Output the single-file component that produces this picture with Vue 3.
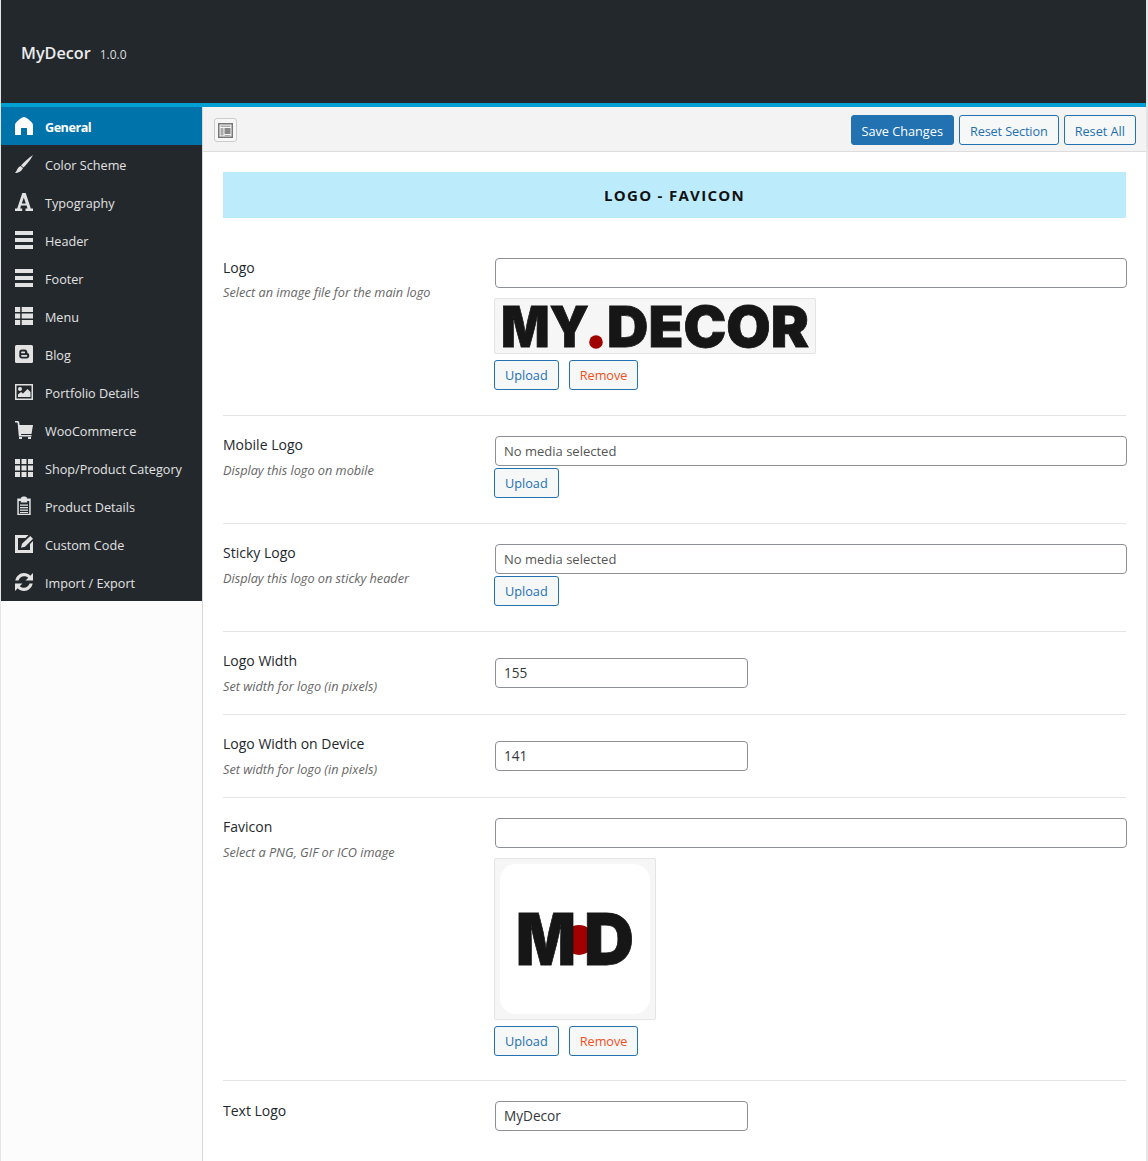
<template>
  <div class="wrap">
    <header class="topbar">
      <span class="brand">MyDecor</span>
      <span class="version">1.0.0</span>
    </header>
    <div class="panel">
      <aside class="side">
        <ul class="menu">
          <li v-for="item in menu" :key="item.label" class="menu-item" :class="{ active: item.active }">
            <svg class="menu-icon" viewBox="0 0 18 18" v-html="item.icon"></svg>
            <span class="menu-label">{{ item.label }}</span>
          </li>
        </ul>
      </aside>
      <main class="main">
        <div class="toolbar">
          <button class="expand">
            <svg width="15" height="15" viewBox="0 0 15 15">
              <rect x="0.75" y="0.75" width="13.5" height="13.5" fill="none" stroke="#777" stroke-width="1.5" />
              <rect x="2.5" y="2.5" width="10" height="1.5" fill="#aaa" />
              <rect x="2.5" y="5" width="3" height="7.5" fill="#aaa" />
              <rect x="6.5" y="5" width="6" height="6" fill="#888" />
              <rect x="6.5" y="12" width="6" height="1" fill="#aaa" />
            </svg>
          </button>
          <div class="actions">
            <button class="btn primary">Save Changes</button>
            <button class="btn tight">Reset Section</button>
            <button class="btn">Reset All</button>
          </div>
        </div>
        <div class="content">
          <h2 class="section-title">LOGO - FAVICON</h2>

          <section class="row first">
            <div class="label">
              <h4>Logo</h4>
              <p>Select an image file for the main logo</p>
            </div>
            <div class="field">
              <input class="text" type="text" />
              <div class="thumb logo-thumb">
                <svg width="320" height="54" viewBox="0 0 320 54">
                  <text x="6" y="47.5" class="logo-text" font-size="57" textLength="88" lengthAdjust="spacingAndGlyphs">MY</text>
                  <circle cx="101" cy="43" r="6.8" fill="#a00000" />
                  <text x="112" y="47.5" class="logo-text" font-size="57" textLength="202" lengthAdjust="spacingAndGlyphs">DECOR</text>
                </svg>
              </div>
              <div class="btns">
                <button class="btn up">Upload</button>
                <button class="btn up remove">Remove</button>
              </div>
            </div>
          </section>

          <section class="row">
            <div class="label">
              <h4>Mobile Logo</h4>
              <p>Display this logo on mobile</p>
            </div>
            <div class="field">
              <input class="text" type="text" placeholder="No media selected" />
              <div class="btns near">
                <button class="btn up">Upload</button>
              </div>
            </div>
          </section>

          <section class="row">
            <div class="label">
              <h4>Sticky Logo</h4>
              <p>Display this logo on sticky header</p>
            </div>
            <div class="field">
              <input class="text" type="text" placeholder="No media selected" />
              <div class="btns near">
                <button class="btn up">Upload</button>
              </div>
            </div>
          </section>

          <section class="row number">
            <div class="label">
              <h4>Logo Width</h4>
              <p>Set width for logo (in pixels)</p>
            </div>
            <div class="field">
              <input class="text short" type="text" value="155" />
            </div>
          </section>

          <section class="row number">
            <div class="label">
              <h4>Logo Width on Device</h4>
              <p>Set width for logo (in pixels)</p>
            </div>
            <div class="field">
              <input class="text short" type="text" value="141" />
            </div>
          </section>

          <section class="row favicon">
            <div class="label">
              <h4>Favicon</h4>
              <p>Select a PNG, GIF or ICO image</p>
            </div>
            <div class="field">
              <input class="text" type="text" />
              <div class="thumb fav-thumb">
                <div class="fav-inner">
                  <svg width="150" height="150" viewBox="0 0 150 150">
                    <circle cx="79" cy="76" r="15" fill="#a00000" />
                    <text x="16" y="101" class="logo-text" font-size="72" textLength="60" lengthAdjust="spacingAndGlyphs">M</text>
                    <text x="84" y="101" class="logo-text" font-size="72" textLength="50" lengthAdjust="spacingAndGlyphs">D</text>
                  </svg>
                </div>
              </div>
              <div class="btns">
                <button class="btn up">Upload</button>
                <button class="btn up remove">Remove</button>
              </div>
            </div>
          </section>

          <section class="row last">
            <div class="label">
              <h4>Text Logo</h4>
            </div>
            <div class="field">
              <input class="text short" type="text" value="MyDecor" />
            </div>
          </section>
        </div>
      </main>
    </div>
  </div>
</template>

<script setup>
const bars = '<path d="M0 0h18v4H0zM0 7h18v4H0zM0 14h18v4H0z"/>'

const menu = [
  { label: 'General', active: true, icon: '<path d="M9 0C11 0 18 5 18 8V18H12V11H6V18H0V8C0 5 7 0 9 0z"/>' },
  { label: 'Color Scheme', icon: '<path d="M18 0C15.500 5 11.500 9.500 8.500 12.500L6 10.500C9 7 14 2.500 18 0z"/><path d="M5.500 11L8 13C7 16 3 18 0 18C2 16.500 2 12.500 5.500 11z"/>' },
  { label: 'Typography', icon: '<path fill-rule="evenodd" d="M7.300 0h3.400L15.800 15.500H18V18h-7.500v-2.500h2L11.600 12.500H6L5.200 15.500h2V18H0v-2.500h2.200zM8.800 4.500L6.800 10.500h4z"/>' },
  { label: 'Header', icon: bars },
  { label: 'Footer', icon: bars },
  { label: 'Menu', icon: '<path d="M0 0h5.200v5H0zM6.700 0H18v5H6.700zM0 6.500h5.200v5H0zM6.700 6.500H18v5H6.700zM0 13h5.200v5H0zM6.700 13H18v5H6.700z"/>' },
  { label: 'Blog', icon: '<path fill-rule="evenodd" d="M1.500 0h15A1.500 1.500 0 0 1 18 1.500v15a1.500 1.500 0 0 1-1.500 1.500h-15A1.500 1.500 0 0 1 0 16.500v-15A1.500 1.500 0 0 1 1.500 0zM7 4.500A2.700 2.700 0 0 0 4.300 7.200v3.600A2.700 2.700 0 0 0 7 13.500h4.500a2.700 2.700 0 0 0 2.700-2.700V9.700c0-.9-.8-1.500-1.700-1.500 0-2-1-3.700-3-3.700zM7 6.500h2.200a.9.900 0 0 1 0 1.800H7a.9.900 0 0 1 0-1.800zM7 9.900h4.400a.9.900 0 0 1 0 1.800H7a.9.900 0 0 1 0-1.800z"/>' },
  { label: 'Portfolio Details', icon: '<path fill-rule="evenodd" d="M0 1h18v16H0zM1.500 2.500v13h15v-13z"/><circle cx="5" cy="6" r="2"/><path d="M3 14v-2.500l3-2.500 2 1.500 4.500-4.500 3 3V14z"/>' },
  { label: 'WooCommerce', icon: '<path d="M0 0h2.500c1 0 1.500.5 1.800 1.500L4.500 4H18l-1.500 9-10.500 0 .2 1H16.500v1.500H3.800L2.700 2.500C2.500 1.800 2.200 1.500 1.500 1.500H0z"/><rect x="4" y="16" width="3" height="2"/><rect x="13" y="16" width="3" height="2"/>' },
  { label: 'Shop/Product Category', icon: '<path d="M0 0h5v5H0zM6.500 0h5v5h-5zM13 0h5v5h-5zM0 6.500h5v5H0zM6.500 6.500h5v5h-5zM13 6.500h5v5h-5zM0 13h5v5H0zM6.500 13h5v5h-5zM13 13h5v5h-5z"/>' },
  { label: 'Product Details', icon: '<path fill-rule="evenodd" d="M2.300 1.500h3.700V1C6 .2 7.500-.5 9-.5s3 .7 3 1.500v.5h3.700V18H2.300zM3.800 4v12.700h10.400V4h-2v1.500h-6.400V4z"/><path d="M5 7.500h8v1.200H5zM5 10h8v1.200H5zM5 12.500h8v1.200H5zM5 15h8v1H5z"/>' },
  { label: 'Custom Code', icon: '<path d="M0 0h13.500L10.500 3H3v12h12V9l3-3V18H0z"/><path d="M15.300 1L18 3.700 10 11.800l-4 1 1-4z"/>' },
  { label: 'Import / Export', icon: '<path d="M9 0c2.500 0 4.700 1 6.300 2.700L18 0v7.500h-7.500l2.800-2.800C11.800 3.600 10.500 3.200 9 3.200c-2.600 0-4.800 1.800-5.500 4.300H.3C1.100 3.200 4.700 0 9 0z"/><path d="M9 18c-2.500 0-4.700-1-6.300-2.700L0 18v-7.500h7.500l-2.800 2.800c1.500 1.100 2.800 1.500 4.300 1.500 2.600 0 4.800-1.800 5.500-4.300h3.200C16.900 14.800 13.300 18 9 18z"/>' },
]
</script>

<style scoped>
* {
  box-sizing: border-box;
}

.wrap {
  height: 1161px;
  overflow: hidden;
  padding: 0 2px 0 1px;
  background: #e5e5e5;
  font-family: "Open Sans", sans-serif;
  font-size: 12.7px;
  color: #444;
}

.topbar {
  height: 107px;
  background: #23282d;
  border-bottom: 4px solid #00a0d2;
  padding-left: 20px;
  padding-top: 42px;
  display: flex;
  align-items: baseline;
  gap: 9px;
  color: #ececec;
}

.brand {
  font-size: 16.2px;
  font-weight: 600;
  line-height: 22px;
}

.version {
  font-size: 12px;
  color: #ddd;
}

.panel {
  display: flex;
  height: 1054px;
  background: #fff;
}

.side {
  width: 202px;
  flex: none;
  background: #fcfcfc;
  border-right: 1px solid #d8d8d8;
}

.menu {
  list-style: none;
  margin: 0;
  padding: 0;
  width: 201px;
  background: #23282d;
}

.menu-item {
  height: 38px;
  display: flex;
  align-items: center;
  padding-left: 14px;
  gap: 12px;
  color: #e2e2e2;
  font-size: 12.65px;
}

.menu-label {
  padding-top: 2px;
}

.menu-item.active {
  background: #0073aa;
  color: #fff;
  font-weight: 700;
}

.menu-item.active .menu-label {
  letter-spacing: -0.5px;
}

.menu-icon {
  width: 18px;
  height: 18px;
  flex: none;
  fill: #e2e2e2;
  overflow: visible;
}

.active .menu-icon {
  fill: #fff;
}

.main {
  flex: 1;
  min-width: 0;
}

.toolbar {
  height: 45px;
  background: #f3f3f3;
  border-bottom: 1px solid #ddd;
  display: flex;
  align-items: flex-start;
  justify-content: space-between;
  padding: 8px 10px 0 11px;
}

.expand {
  width: 23px;
  height: 24px;
  margin-top: 3px;
  padding: 0;
  background: #f7f7f7;
  border: 1px solid #ccc;
  border-radius: 3px;
  display: flex;
  align-items: center;
  justify-content: center;
}

.actions {
  display: flex;
  gap: 5px;
}

.btn {
  height: 30px;
  padding: 2px 10px 0;
  font-family: inherit;
  font-size: 12.7px;
  line-height: 26px;
  color: #2271b1;
  background: #f6f7f7;
  border: 1px solid #2271b1;
  border-radius: 3px;
}

.btn.tight {
  letter-spacing: -0.12px;
}

.btn.up {
  padding-top: 0;
  line-height: 28px;
}

.btn.primary {
  background: #2271b1;
  color: #fff;
}

.btn.remove {
  color: #f1501d;
}

.content {
  padding: 20px 20px 0 20px;
}

.section-title {
  margin: 0;
  height: 46px;
  background: #bcebfb;
  color: #111;
  font-size: 15px;
  font-weight: 700;
  letter-spacing: 1.3px;
  line-height: 47px;
  text-align: center;
}

.row {
  display: flex;
  border-bottom: 1px solid #e5e5e5;
  padding: 20px 0 25px;
}

.row.first {
  margin-top: 20px;
}

.row.number {
  padding: 26px 0 26px;
}

.row.favicon {
  padding-bottom: 24px;
}

.row.last {
  border-bottom: 0;
}

.label {
  width: 272px;
  flex: none;
}

.label h4 {
  margin: -1px 0 0;
  font-size: 14px;
  font-weight: 400;
  line-height: 20px;
  color: #23282d;
}

.first .label h4,
.last .label h4 {
  margin-top: 0;
}

.label p {
  margin: 5px 0 0;
  font-size: 12.7px;
  font-style: italic;
  line-height: 20px;
  color: #666;
}

.first .label p {
  margin-top: 4px;
}

.number .label {
  height: 30px;
}

.number .label h4 {
  margin-top: -7px;
}

.number .label p {
  margin-top: 5px;
}

.field {
  width: 632px;
  flex: none;
}

.text {
  display: block;
  width: 100%;
  height: 30px;
  padding: 0 8px 2px;
  font-family: inherit;
  font-size: 13.6px;
  color: #32373c;
  background: #fff;
  border: 1px solid #8c8f94;
  border-radius: 4px;
  outline: 0;
}

.text::placeholder {
  color: #555;
  opacity: 1;
  font-size: 13px;
}

.text.short {
  width: 253px;
}

.thumb {
  background: #f6f6f6;
  border: 1px solid #e4e4e4;
  border-radius: 2px;
  margin-left: -1px;
}

.logo-thumb {
  width: 322px;
  height: 56px;
  margin-top: 10px;
}

.fav-thumb {
  width: 162px;
  height: 162px;
  margin-top: 10px;
  padding: 5px;
}

.fav-inner {
  width: 150px;
  height: 150px;
  background: #fff;
  border-radius: 16px;
}

.thumb svg {
  display: block;
  overflow: visible;
}

.logo-text {
  font-family: "Inter", sans-serif;
  font-weight: 900;
  fill: #161616;
  stroke: #161616;
  stroke-width: 0.8;
}

.btns {
  display: flex;
  gap: 10px;
  margin: 6px 0 0 -1px;
}

.btns.near {
  margin-top: 2px;
}
</style>

<style>
html,
body {
  margin: 0;
  background: #fff;
  overflow: hidden;
}
</style>
